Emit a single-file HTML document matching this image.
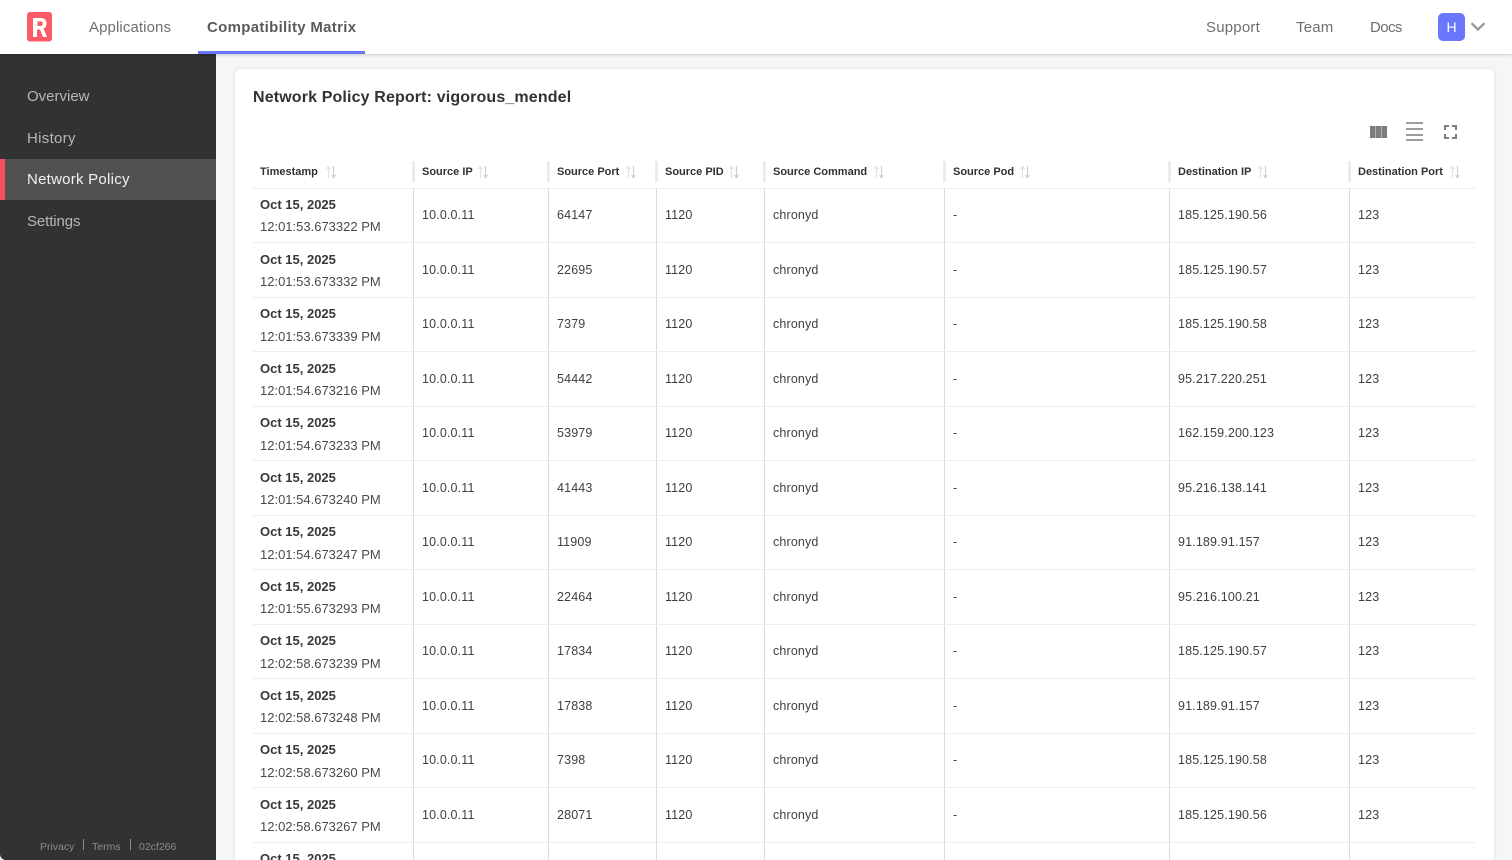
<!DOCTYPE html>
<html><head><meta charset="utf-8"><style>
*{box-sizing:border-box}
html,body{margin:0;width:1512px;height:860px;overflow:hidden;background:#fff;font-family:"Liberation Sans",sans-serif}
#wrap{position:absolute;left:0;top:0;width:1512px;height:860px;overflow:hidden;background:#f5f6f8}
.abs{position:absolute;white-space:nowrap}
#top{position:absolute;left:0;top:0;width:1512px;height:54px;background:#fff;box-shadow:0 1px 3px rgba(0,0,0,.18);z-index:3}
.nav{font-size:15px;color:#6f6f6f;top:19px;line-height:18px}
#side{position:absolute;left:0;top:54px;width:216px;height:806px;background:#323232;z-index:2;border-bottom-left-radius:6px}
.si{position:absolute;left:27px;font-size:15px;line-height:20px;color:#b3b8b5}
#card{position:absolute;left:235px;top:69px;width:1259px;height:830px;background:#fff;border-radius:5px;box-shadow:0 0 3px rgba(0,0,0,.12)}
.r{position:absolute;left:253px;width:1222px;height:1px;background:#ededed}
.v{position:absolute;width:1px;background:#dadada}
.vh{position:absolute;width:3px;top:161px;height:21px;background:#ececec}
.h{position:absolute;top:166px;font-size:11px;font-weight:bold;color:#323232;line-height:13px;white-space:nowrap}
.d{position:absolute;font-size:13px;font-weight:bold;color:#383838;line-height:16px;white-space:nowrap;left:260px}
.t{position:absolute;font-size:13px;color:#4a4a4a;line-height:16px;white-space:nowrap;left:260px}
.c{position:absolute;font-size:12.5px;color:#3f3f3f;line-height:16px;white-space:nowrap;letter-spacing:.15px}
svg{position:absolute;display:block}
</style></head><body><div id="wrap">
<div id="top">
<svg style="left:27px;top:12px" width="26" height="30" viewBox="0 0 26 30"><rect width="25" height="29.5" rx="3" fill="#fb5a67"/><path fill-rule="evenodd" d="M6 25V6h8c3.500 0 5.500 2 5.500 5.500 0 2.500-1.100 4.200-3 5l3.500 8.500h-4l-3-7.500h-3V25zM10.500 14h3c1.500 0 2.300-.8 2.300-2.300 0-1.500-.8-2.300-2.300-2.300h-3z" fill="#fff"/></svg>
<div class="abs nav" style="left:89px;letter-spacing:.1px">Applications</div>
<div class="abs nav" style="left:207px;font-weight:bold;color:#5b5b5b;letter-spacing:.3px">Compatibility Matrix</div>
<div class="abs" style="left:198px;top:51px;width:167px;height:3px;background:#6a77fb"></div>
<div class="abs nav" style="left:1206px;letter-spacing:.2px">Support</div>
<div class="abs nav" style="left:1296px;letter-spacing:.2px">Team</div>
<div class="abs nav" style="left:1370px;letter-spacing:-.6px">Docs</div>
<div class="abs" style="left:1438px;top:13px;width:27px;height:28px;border-radius:5px;background:#6a77fb;color:#fff;font-size:14px;line-height:28px;text-align:center">H</div>
<svg style="left:1470px;top:20px" width="16" height="12" viewBox="0 0 16 12"><path d="M1.500 3.200 8 9.500l6.500-6.300" fill="none" stroke="#999" stroke-width="2.300"/></svg>
</div>
<div id="side">
<div class="si" style="top:33px">Overview</div>
<div class="si" style="top:75px;letter-spacing:.3px">History</div>
<div style="position:absolute;left:0;top:104.500px;width:216px;height:41.500px;background:#515151;border-left:5px solid #f7505e"></div>
<div class="si" style="top:116px;color:#f2f2f2;letter-spacing:.25px">Network Policy</div>
<div class="si" style="top:158px;letter-spacing:-.1px">Settings</div>
<div class="abs" style="left:40px;top:786px;font-size:10.500px;line-height:14px;color:#8b8b8b">Privacy</div>
<div class="abs" style="left:83px;top:785px;width:1px;height:11px;background:#8b8b8b"></div>
<div class="abs" style="left:92px;top:786px;font-size:10.500px;line-height:14px;color:#8b8b8b">Terms</div>
<div class="abs" style="left:130px;top:785px;width:1px;height:11px;background:#8b8b8b"></div>
<div class="abs" style="left:139px;top:786px;font-size:10.500px;line-height:14px;color:#8b8b8b">02cf266</div>
</div>
<div id="card"></div>
<div class="abs" style="left:253px;top:88px;font-size:16px;font-weight:bold;line-height:20px;color:#323232;letter-spacing:.14px">Network Policy Report: vigorous_mendel</div>
<svg style="left:1370px;top:126px" width="17" height="12"><path d="M0 0h5.400v12H0zM5.800 0h5.400v12H5.800zM11.600 0H17v12h-5.400z" fill="#7d7d7d"/></svg>
<svg style="left:1406px;top:122px" width="17" height="19"><path d="M0 1h17M0 7h17M0 13h17M0 18h17" stroke="#7d7d7d" stroke-width="1.500"/></svg>
<svg style="left:1444px;top:125px" width="13" height="14"><path d="M1 5V1h4M8 1h4v4M12 9v4H8M5 13H1V9" fill="none" stroke="#7d7d7d" stroke-width="2"/></svg>

<div class="h" style="left:260px">Timestamp</div>
<div class="h" style="left:422px">Source IP</div>
<div class="h" style="left:557px">Source Port</div>
<div class="h" style="left:665px">Source PID</div>
<div class="h" style="left:773px">Source Command</div>
<div class="h" style="left:953px">Source Pod</div>
<div class="h" style="left:1178px">Destination IP</div>
<div class="h" style="left:1358px">Destination Port</div>

<svg style="left:325px;top:165px" width="12" height="14"><path d="M3.500 13V2M1.500 4 3.500 1.500 5.500 4" fill="none" stroke="#e2e2e2" stroke-width="1.200"/><path d="M8.500 1v11M6.500 10l2 2.500 2-2.500" fill="none" stroke="#cfcfcf" stroke-width="1.200"/></svg>
<svg style="left:477px;top:165px" width="12" height="14"><path d="M3.500 13V2M1.500 4 3.500 1.500 5.500 4" fill="none" stroke="#e2e2e2" stroke-width="1.200"/><path d="M8.500 1v11M6.500 10l2 2.500 2-2.500" fill="none" stroke="#cfcfcf" stroke-width="1.200"/></svg>
<svg style="left:625px;top:165px" width="12" height="14"><path d="M3.500 13V2M1.500 4 3.500 1.500 5.500 4" fill="none" stroke="#e2e2e2" stroke-width="1.200"/><path d="M8.500 1v11M6.500 10l2 2.500 2-2.500" fill="none" stroke="#cfcfcf" stroke-width="1.200"/></svg>
<svg style="left:728px;top:165px" width="12" height="14"><path d="M3.500 13V2M1.500 4 3.500 1.500 5.500 4" fill="none" stroke="#e2e2e2" stroke-width="1.200"/><path d="M8.500 1v11M6.500 10l2 2.500 2-2.500" fill="none" stroke="#cfcfcf" stroke-width="1.200"/></svg>
<svg style="left:873px;top:165px" width="12" height="14"><path d="M3.500 13V2M1.500 4 3.500 1.500 5.500 4" fill="none" stroke="#e2e2e2" stroke-width="1.200"/><path d="M8.500 1v11M6.500 10l2 2.500 2-2.500" fill="none" stroke="#cfcfcf" stroke-width="1.200"/></svg>
<svg style="left:1019px;top:165px" width="12" height="14"><path d="M3.500 13V2M1.500 4 3.500 1.500 5.500 4" fill="none" stroke="#e2e2e2" stroke-width="1.200"/><path d="M8.500 1v11M6.500 10l2 2.500 2-2.500" fill="none" stroke="#cfcfcf" stroke-width="1.200"/></svg>
<svg style="left:1257px;top:165px" width="12" height="14"><path d="M3.500 13V2M1.500 4 3.500 1.500 5.500 4" fill="none" stroke="#e2e2e2" stroke-width="1.200"/><path d="M8.500 1v11M6.500 10l2 2.500 2-2.500" fill="none" stroke="#cfcfcf" stroke-width="1.200"/></svg>
<svg style="left:1449px;top:165px" width="12" height="14"><path d="M3.500 13V2M1.500 4 3.500 1.500 5.500 4" fill="none" stroke="#e2e2e2" stroke-width="1.200"/><path d="M8.500 1v11M6.500 10l2 2.500 2-2.500" fill="none" stroke="#cfcfcf" stroke-width="1.200"/></svg>

<div class="vh" style="left:412px"></div><div class="v" style="left:413px;top:188px;height:672px"></div>
<div class="vh" style="left:547px"></div><div class="v" style="left:548px;top:188px;height:672px"></div>
<div class="vh" style="left:655px"></div><div class="v" style="left:656px;top:188px;height:672px"></div>
<div class="vh" style="left:763px"></div><div class="v" style="left:764px;top:188px;height:672px"></div>
<div class="vh" style="left:943px"></div><div class="v" style="left:944px;top:188px;height:672px"></div>
<div class="vh" style="left:1168px"></div><div class="v" style="left:1169px;top:188px;height:672px"></div>
<div class="vh" style="left:1348px"></div><div class="v" style="left:1349px;top:188px;height:672px"></div>

<div class="r" style="top:188px"></div><div class="r" style="top:242px"></div><div class="r" style="top:297px"></div><div class="r" style="top:351px"></div><div class="r" style="top:406px"></div><div class="r" style="top:460px"></div><div class="r" style="top:515px"></div><div class="r" style="top:569px"></div><div class="r" style="top:624px"></div><div class="r" style="top:678px"></div><div class="r" style="top:733px"></div><div class="r" style="top:787px"></div><div class="r" style="top:842px"></div>

<div class="d" style="top:197px">Oct 15, 2025</div><div class="t" style="top:219px">12:01:53.673322 PM</div>
<div class="c" style="left:422px;top:207px">10.0.0.11</div><div class="c" style="left:557px;top:207px">64147</div><div class="c" style="left:665px;top:207px">1120</div><div class="c" style="left:773px;top:207px">chronyd</div><div class="c" style="left:953px;top:207px">-</div><div class="c" style="left:1178px;top:207px">185.125.190.56</div><div class="c" style="left:1358px;top:207px">123</div>

<div class="d" style="top:252px">Oct 15, 2025</div><div class="t" style="top:274px">12:01:53.673332 PM</div>
<div class="c" style="left:422px;top:262px">10.0.0.11</div><div class="c" style="left:557px;top:262px">22695</div><div class="c" style="left:665px;top:262px">1120</div><div class="c" style="left:773px;top:262px">chronyd</div><div class="c" style="left:953px;top:262px">-</div><div class="c" style="left:1178px;top:262px">185.125.190.57</div><div class="c" style="left:1358px;top:262px">123</div>

<div class="d" style="top:306px">Oct 15, 2025</div><div class="t" style="top:329px">12:01:53.673339 PM</div>
<div class="c" style="left:422px;top:316px">10.0.0.11</div><div class="c" style="left:557px;top:316px">7379</div><div class="c" style="left:665px;top:316px">1120</div><div class="c" style="left:773px;top:316px">chronyd</div><div class="c" style="left:953px;top:316px">-</div><div class="c" style="left:1178px;top:316px">185.125.190.58</div><div class="c" style="left:1358px;top:316px">123</div>

<div class="d" style="top:361px">Oct 15, 2025</div><div class="t" style="top:383px">12:01:54.673216 PM</div>
<div class="c" style="left:422px;top:371px">10.0.0.11</div><div class="c" style="left:557px;top:371px">54442</div><div class="c" style="left:665px;top:371px">1120</div><div class="c" style="left:773px;top:371px">chronyd</div><div class="c" style="left:953px;top:371px">-</div><div class="c" style="left:1178px;top:371px">95.217.220.251</div><div class="c" style="left:1358px;top:371px">123</div>

<div class="d" style="top:415px">Oct 15, 2025</div><div class="t" style="top:438px">12:01:54.673233 PM</div>
<div class="c" style="left:422px;top:425px">10.0.0.11</div><div class="c" style="left:557px;top:425px">53979</div><div class="c" style="left:665px;top:425px">1120</div><div class="c" style="left:773px;top:425px">chronyd</div><div class="c" style="left:953px;top:425px">-</div><div class="c" style="left:1178px;top:425px">162.159.200.123</div><div class="c" style="left:1358px;top:425px">123</div>

<div class="d" style="top:470px">Oct 15, 2025</div><div class="t" style="top:492px">12:01:54.673240 PM</div>
<div class="c" style="left:422px;top:480px">10.0.0.11</div><div class="c" style="left:557px;top:480px">41443</div><div class="c" style="left:665px;top:480px">1120</div><div class="c" style="left:773px;top:480px">chronyd</div><div class="c" style="left:953px;top:480px">-</div><div class="c" style="left:1178px;top:480px">95.216.138.141</div><div class="c" style="left:1358px;top:480px">123</div>

<div class="d" style="top:524px">Oct 15, 2025</div><div class="t" style="top:547px">12:01:54.673247 PM</div>
<div class="c" style="left:422px;top:534px">10.0.0.11</div><div class="c" style="left:557px;top:534px">11909</div><div class="c" style="left:665px;top:534px">1120</div><div class="c" style="left:773px;top:534px">chronyd</div><div class="c" style="left:953px;top:534px">-</div><div class="c" style="left:1178px;top:534px">91.189.91.157</div><div class="c" style="left:1358px;top:534px">123</div>

<div class="d" style="top:579px">Oct 15, 2025</div><div class="t" style="top:601px">12:01:55.673293 PM</div>
<div class="c" style="left:422px;top:589px">10.0.0.11</div><div class="c" style="left:557px;top:589px">22464</div><div class="c" style="left:665px;top:589px">1120</div><div class="c" style="left:773px;top:589px">chronyd</div><div class="c" style="left:953px;top:589px">-</div><div class="c" style="left:1178px;top:589px">95.216.100.21</div><div class="c" style="left:1358px;top:589px">123</div>

<div class="d" style="top:633px">Oct 15, 2025</div><div class="t" style="top:656px">12:02:58.673239 PM</div>
<div class="c" style="left:422px;top:643px">10.0.0.11</div><div class="c" style="left:557px;top:643px">17834</div><div class="c" style="left:665px;top:643px">1120</div><div class="c" style="left:773px;top:643px">chronyd</div><div class="c" style="left:953px;top:643px">-</div><div class="c" style="left:1178px;top:643px">185.125.190.57</div><div class="c" style="left:1358px;top:643px">123</div>

<div class="d" style="top:688px">Oct 15, 2025</div><div class="t" style="top:710px">12:02:58.673248 PM</div>
<div class="c" style="left:422px;top:698px">10.0.0.11</div><div class="c" style="left:557px;top:698px">17838</div><div class="c" style="left:665px;top:698px">1120</div><div class="c" style="left:773px;top:698px">chronyd</div><div class="c" style="left:953px;top:698px">-</div><div class="c" style="left:1178px;top:698px">91.189.91.157</div><div class="c" style="left:1358px;top:698px">123</div>

<div class="d" style="top:742px">Oct 15, 2025</div><div class="t" style="top:765px">12:02:58.673260 PM</div>
<div class="c" style="left:422px;top:752px">10.0.0.11</div><div class="c" style="left:557px;top:752px">7398</div><div class="c" style="left:665px;top:752px">1120</div><div class="c" style="left:773px;top:752px">chronyd</div><div class="c" style="left:953px;top:752px">-</div><div class="c" style="left:1178px;top:752px">185.125.190.58</div><div class="c" style="left:1358px;top:752px">123</div>

<div class="d" style="top:797px">Oct 15, 2025</div><div class="t" style="top:819px">12:02:58.673267 PM</div>
<div class="c" style="left:422px;top:807px">10.0.0.11</div><div class="c" style="left:557px;top:807px">28071</div><div class="c" style="left:665px;top:807px">1120</div><div class="c" style="left:773px;top:807px">chronyd</div><div class="c" style="left:953px;top:807px">-</div><div class="c" style="left:1178px;top:807px">185.125.190.56</div><div class="c" style="left:1358px;top:807px">123</div>

<div class="d" style="top:851px">Oct 15, 2025</div>
</div></body></html>
